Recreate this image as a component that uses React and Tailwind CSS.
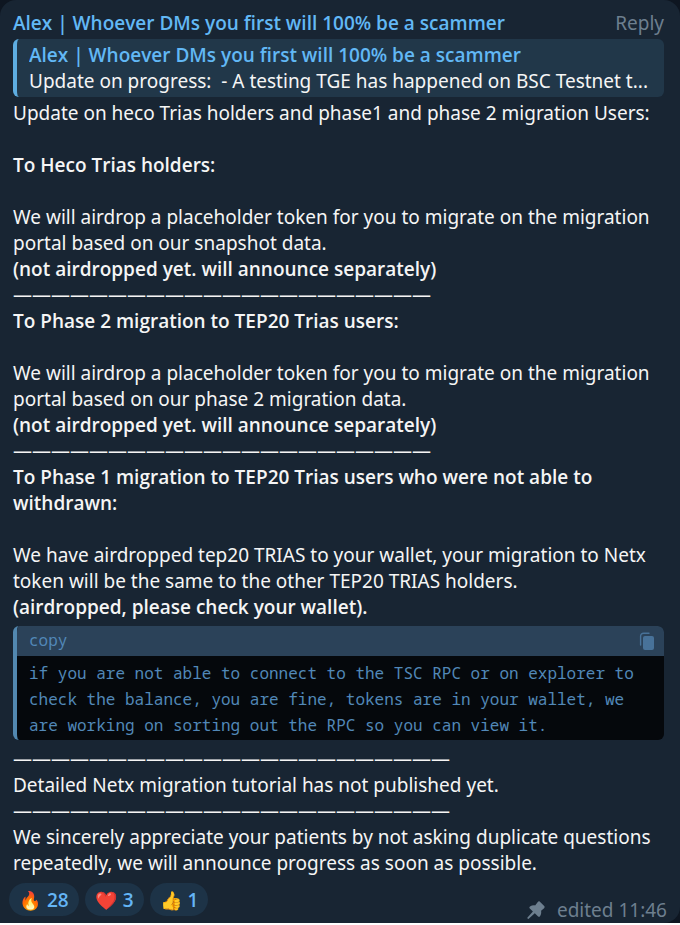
const AUTHOR = "Alex | Whoever DMs you first will 100% be a scammer";

const reactions = [
  { emoji: "🔥", name: "Fire", count: 28 },
  { emoji: "❤️", name: "Heart", count: 3 },
  { emoji: "👍", name: "Thumbs up", count: 1 },
];

const Dashes = ({ count }) => <p>{"—".repeat(count)}</p>;

const Strong = ({ children, className = "" }) => (
  <p className={`font-['Open_Sans',sans-serif] font-semibold ${className}`}>{children}</p>
);

const CopyIcon = () => (
  <svg viewBox="0 0 16 18" className="w-4 h-[18px]" aria-hidden="true">
    <path d="M1.6 13V4.200a3 3 0 0 1 3-3H10" fill="none" stroke="currentColor" strokeWidth="1.4" strokeLinecap="round" />
    <rect x="4" y="4" width="11" height="14" rx="2" fill="currentColor" />
  </svg>
);

const PinIcon = () => (
  <svg viewBox="0 0 18 18" className="w-[18px] h-[18px]" aria-hidden="true">
    <path
      d="M10.8.9c.6-.7 1.500-.7 2.100-.1l4.300 4.300c.6.6.6 1.500-.1 2.100l-3 2.600c.3 1.800.1 3.900-1.100 5.500-.5.7-1.300.7-1.900.1L7.800 12.200 1.700 17.700c-.8.6-1.800-.4-1.200-1.200L5.900 10.400 2.800 7.400c-.6-.6-.6-1.500.2-2 1.600-1 3.400-1.200 5.100-1z"
      fill="currentColor"
    />
  </svg>
);

const App = () => {
  return (
    <div className="bg-[#0e1621] font-['Noto_Sans',sans-serif] text-[19px] leading-[26px] text-[#f5f5f5]">
      <article className="rounded-t-2xl rounded-br-2xl bg-[#182533] px-[13px] pt-[10px]">
        {/* Header */}
        <header className="flex justify-between">
          <h1 className="font-['Open_Sans',sans-serif] font-semibold text-[#62b8f5]">{AUTHOR}</h1>
          <button className="mr-[3px] text-[#6d7f8f]">Reply</button>
        </header>

        {/* Quoted message */}
        <a
          href="#quoted"
          className="mt-[3px] mr-[3px] block rounded-md border-l-4 border-[#5eade1] bg-[#213749] py-[3px] pl-3 pr-1"
        >
          <p className="truncate font-['Open_Sans',sans-serif] font-semibold text-[#62b8f5]">{AUTHOR}</p>
          <p className="truncate whitespace-pre">
            {"Update on progress:  - A testing TGE has happened on BSC Testnet t..."}
          </p>
        </a>

        {/* Message text */}
        <div className="mt-[3px]">
          <p>Update on heco Trias holders and phase1 and phase 2 migration Users:</p>
          <Strong className="mt-[26px]">To Heco Trias holders:</Strong>
          <p className="mt-[26px]">
            We will airdrop a placeholder token for you to migrate on the migration portal based on our snapshot data.
          </p>
          <Strong>(not airdropped yet. will announce separately)</Strong>
          <Dashes count={22} />
          <Strong>To Phase 2 migration to TEP20 Trias users:</Strong>
          <p className="mt-[26px]">
            We will airdrop a placeholder token for you to migrate on the migration portal based on our phase 2
            migration data.
          </p>
          <Strong>(not airdropped yet. will announce separately)</Strong>
          <Dashes count={22} />
          <Strong>To Phase 1 migration to TEP20 Trias users who were not able to withdrawn:</Strong>
          <p className="mt-[26px]">
            We have airdropped tep20 TRIAS to your wallet, your migration to Netx token will be the same to the other
            TEP20 TRIAS holders.
          </p>
          <Strong>(airdropped, please check your wallet).</Strong>
        </div>

        {/* Code block */}
        <div className="my-[6px] mr-[3px] overflow-hidden rounded-md border-l-4 border-[#5288b0] bg-[#05080c] font-['Noto_Sans_Mono','DejaVu_Sans_Mono',monospace] text-[16px] text-[#5288b8]">
          <div className="flex h-[30px] items-center justify-between bg-[#2b4259] pl-3 pr-[9px]">
            <span className="pb-0.5">copy</span>
            <button aria-label="Copy code" className="text-[#487299]">
              <CopyIcon />
            </button>
          </div>
          <p className="pt-1 pb-0.5 pl-3 pr-1.5">
            if you are not able to connect to the TSC RPC or on explorer to check the balance, you are fine, tokens are
            in your wallet, we are working on sorting out the RPC so you can view it.
          </p>
        </div>

        <Dashes count={23} />
        <p>Detailed Netx migration tutorial has not published yet.</p>
        <Dashes count={23} />
        <p>
          We sincerely appreciate your patients by not asking duplicate questions repeatedly, we will announce progress
          as soon as possible.
        </p>

        {/* Reactions and time */}
        <footer className="-ml-1 mt-[7px] flex items-end justify-between">
          <div className="mb-[7px] flex gap-[6px]">
            {reactions.map(({ emoji, name, count }) => (
              <button
                key={name}
                aria-label={`${name} ${count}`}
                className="flex h-[33px] items-center gap-[6px] rounded-full bg-[#1d3347] px-[10px] font-['Open_Sans',sans-serif] font-semibold text-[#64b5f6]"
              >
                <span className="text-[18px]">{emoji}</span>
                <span>{count}</span>
              </button>
            ))}
          </div>
          <div className="flex items-center gap-3 text-[#6d7f8f]">
            <PinIcon />
            <span>edited 11:46</span>
          </div>
        </footer>
      </article>
    </div>
  );
};

export default App;
